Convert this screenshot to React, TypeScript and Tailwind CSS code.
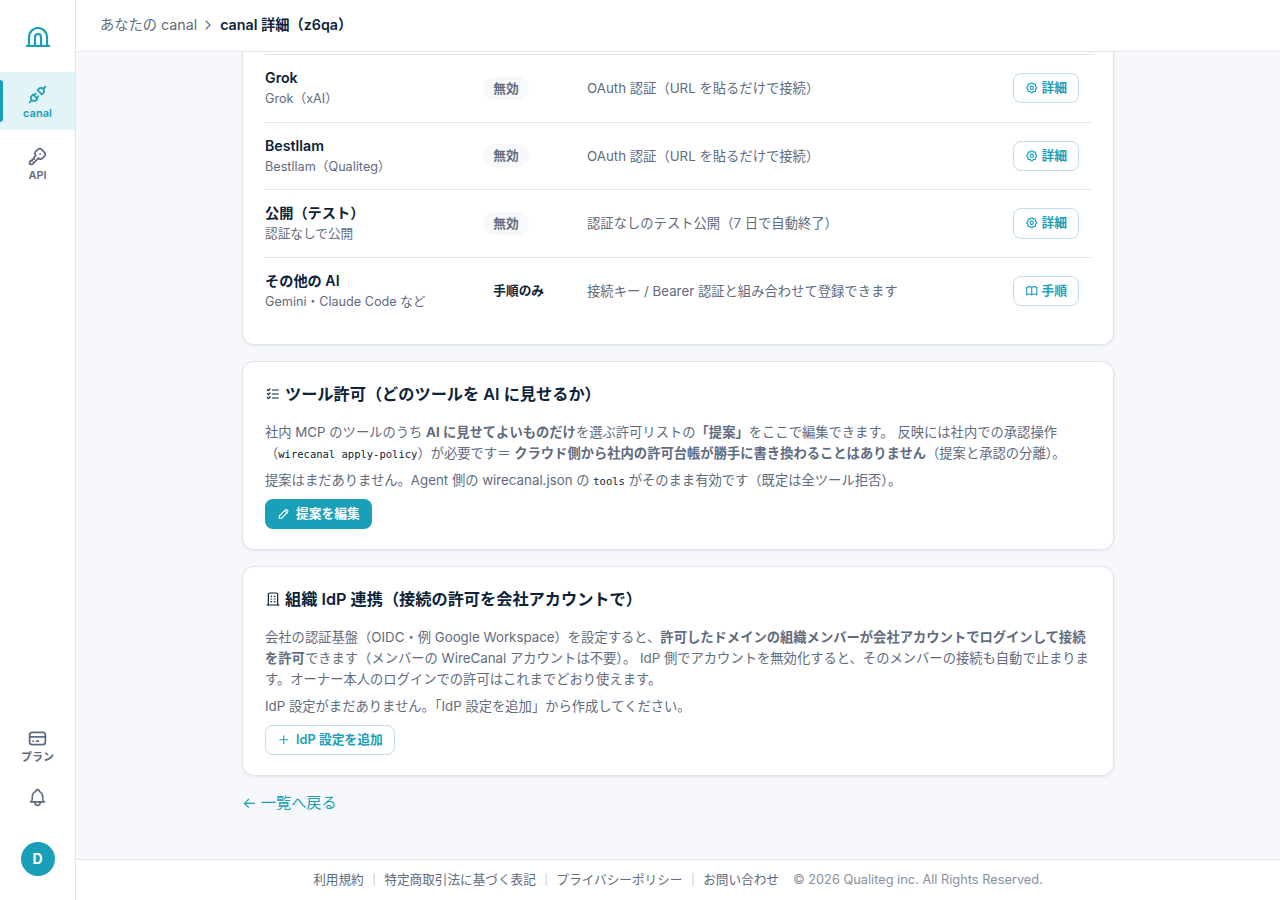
import type { ReactNode } from "react";
import {
  TbBell,
  TbBook,
  TbBuilding,
  TbChevronRight,
  TbCreditCard,
  TbKey,
  TbListCheck,
  TbPencil,
  TbPlugConnected,
  TbPlus,
  TbSettings,
} from "react-icons/tb";

interface Connection {
  name: string;
  sub: string;
  status: string;
  description: string;
  guideOnly?: boolean;
}

const connections: Connection[] = [
  {
    name: "Grok",
    sub: "Grok（xAI）",
    status: "無効",
    description: "OAuth 認証（URL を貼るだけで接続）",
  },
  {
    name: "Bestllam",
    sub: "Bestllam（Qualiteg）",
    status: "無効",
    description: "OAuth 認証（URL を貼るだけで接続）",
  },
  {
    name: "公開（テスト）",
    sub: "認証なしで公開",
    status: "無効",
    description: "認証なしのテスト公開（7 日で自動終了）",
  },
  {
    name: "その他の AI",
    sub: "Gemini・Claude Code など",
    status: "手順のみ",
    description: "接続キー / Bearer 認証と組み合わせて登録できます",
    guideOnly: true,
  },
];

const footerLinks = [
  "利用規約",
  "特定商取引法に基づく表記",
  "プライバシーポリシー",
  "お問い合わせ",
];

function Logo() {
  return (
    <svg
      viewBox="0 0 24 20"
      className="h-5 w-6"
      fill="none"
      stroke="#1a9fb8"
      strokeWidth="2.2"
    >
      <path d="M0 19h24" />
      <path d="M3 19v-9a9 9 0 0 1 18 0v9" />
      <path d="M9 19v-9a3 3 0 0 1 6 0v9" />
    </svg>
  );
}

function Sidebar() {
  return (
    <aside className="flex w-[76px] shrink-0 flex-col items-center border-r border-[#e2e5ec] bg-white text-[11px] font-semibold text-[#5f6b7e]">
      <div className="flex h-[72px] w-full items-center justify-center pt-0.5">
        <Logo />
      </div>
      <a className="relative flex h-[58px] w-full flex-col items-center bg-[#e2f4f7] pt-3 text-[#1a9fb8]">
        <span className="absolute top-2 left-0 h-[42px] w-[3px] rounded-r-[3px] bg-[#1a9fb8]" />
        <TbPlugConnected className="size-[21px]" />
        <span className="leading-4">canal</span>
      </a>
      <a className="mt-1 flex h-[58px] w-full flex-col items-center pt-3">
        <TbKey className="size-[21px]" />
        <span className="leading-4">API</span>
      </a>
      <div className="flex-1" />
      <a className="flex w-full flex-col items-center">
        <TbCreditCard className="size-[21px]" />
        <span className="leading-4">プラン</span>
      </a>
      <TbBell className="mt-[22px] size-[21px]" strokeWidth={1.8} />
      <div className="mt-[34px] mb-6 flex size-[34px] items-center justify-center rounded-full bg-[#1a9fb8] pb-px text-[14px] font-bold text-white">
        D
      </div>
    </aside>
  );
}

function OutlineButton({ children }: { children: ReactNode }) {
  return (
    <button className="flex items-center rounded-lg border border-[#c0dcef] bg-white px-[11px] pb-px text-[12.75px] font-semibold text-[#1a9fb8]">
      {children}
    </button>
  );
}

function Code({ children }: { children: ReactNode }) {
  return (
    <code className="font-['DejaVu_Sans_Mono',monospace] text-[10.5px] leading-none text-[#0b2239]">
      {children}
    </code>
  );
}

function ConnectionRow({ item }: { item: Connection }) {
  return (
    <div className="grid h-[67.6px] grid-cols-[218px_104px_1fr_78px] items-center border-t border-[#e2e5ec]">
      <div>
        <div className="text-[14.2px] leading-[22px] font-semibold">
          {item.name}
        </div>
        <div className="text-[12.66px] leading-[20.6px] text-[#5f6b7e]">
          {item.sub}
        </div>
      </div>
      <div className="pb-[2.6px]">
        <span
          className={
            "inline-block rounded-full px-[10.3px] text-[12.7px] leading-[23px] font-semibold " +
            (item.guideOnly ? "" : "bg-[#f6f8fc] text-[#5f6b7e]")
          }
        >
          {item.status}
        </span>
      </div>
      <div className="pt-[1.4px] text-[13.32px] text-[#5f6b7e]">
        {item.description}
      </div>
      <div className="flex h-[30.4px]">
        <OutlineButton>
          {item.guideOnly ? (
            <TbBook className="mr-[3px] size-[13.5px]" />
          ) : (
            <TbSettings className="mr-[3px] size-[13.5px]" />
          )}
          {item.guideOnly ? "手順" : "詳細"}
        </OutlineButton>
      </div>
    </div>
  );
}

function Card({
  icon,
  title,
  children,
}: {
  icon: ReactNode;
  title: string;
  children: ReactNode;
}) {
  return (
    <section className="mt-4 rounded-xl border border-[#e2e5ec] bg-white px-[22px] pt-[19px] shadow-[0_1px_3px_rgba(16,24,40,0.08)]">
      <h2 className="flex items-center gap-1 text-[16.2px] leading-[26px] font-semibold">
        {icon}
        {title}
      </h2>
      <div className="mt-[15px] text-[13.3px] leading-[21px] text-[#5f6b7e]">
        {children}
      </div>
    </section>
  );
}

export default function App() {
  return (
    <div
      lang="ja"
      className="flex h-[900px] w-[1280px] overflow-hidden bg-[#f6f8fc] font-[Inter,'Noto_Sans_CJK_JP',sans-serif] text-[#0b2239]"
    >
      <Sidebar />
      <div className="flex min-w-0 flex-1 flex-col">
        <header className="flex h-[52px] shrink-0 items-center border-b border-[#e2e5ec] bg-white pb-0.5 pl-6 text-[14.25px]">
          <span className="text-[#5f6b7e]">あなたの canal</span>
          <TbChevronRight
            className="mr-1 ml-[3px] size-4 text-[#5f6b7e]"
            strokeWidth={1.6}
          />
          <span className="font-semibold">canal 詳細（z6qa）</span>
        </header>

        <main className="mx-auto w-[872px] flex-1">
          <section className="h-[293px] rounded-b-xl border border-t-0 border-[#e2e5ec] bg-white px-[22px] pt-0.5 shadow-[0_1px_3px_rgba(16,24,40,0.08)]">
            {connections.map((item) => (
              <ConnectionRow key={item.name} item={item} />
            ))}
          </section>

          <Card
            icon={<TbListCheck className="size-4" strokeWidth={1.8} />}
            title="ツール許可（どのツールを AI に見せるか）"
          >
            <p>
              社内 MCP のツールのうち <b>AI に見せてよいものだけ</b>
              を選ぶ許可リストの<b>「提案」</b>をここで編集できます。
              反映には社内での承認操作（
              <Code>wirecanal apply-policy</Code>
              ）が必要です＝{" "}
              <b>クラウド側から社内の許可台帳が勝手に書き換わることはありません</b>
              （提案と承認の分離）。
            </p>
            <p className="mt-1.5">
              提案はまだありません。Agent 側の wirecanal.json の{" "}
              <Code>tools</Code>{" "}
              がそのまま有効です（既定は全ツール拒否）。
            </p>
            <button className="mt-2 mb-5 flex h-[30px] items-center rounded-lg bg-[#1a9fb8] px-3 pb-px text-[12.75px] font-semibold text-white">
              <TbPencil className="mr-[5.5px] size-[13.5px]" />
              提案を編集
            </button>
          </Card>

          <Card
            icon={<TbBuilding className="size-4" strokeWidth={1.8} />}
            title="組織 IdP 連携（接続の許可を会社アカウントで）"
          >
            <p>
              会社の認証基盤（OIDC・例 Google Workspace）を設定すると、
              <b>
                許可したドメインの組織メンバーが会社アカウントでログインして接続を許可
              </b>
              できます（メンバーの WireCanal アカウントは不要）。 IdP
              側でアカウントを無効化すると、そのメンバーの接続も自動で止まります。オーナー本人のログインでの許可はこれまでどおり使えます。
            </p>
            <p className="mt-1.5">
              IdP 設定がまだありません。「IdP
              設定を追加」から作成してください。
            </p>
            <div className="mt-2 mb-5 flex h-[30px]">
              <OutlineButton>
                <TbPlus className="mr-[5.5px] size-[13.5px]" />
                IdP 設定を追加
              </OutlineButton>
            </div>
          </Card>

          <a className="mt-[15px] block text-[15.2px] leading-6 text-[#1a9fb8]">
            ← 一覧へ戻る
          </a>
        </main>

        <footer className="flex h-[41px] shrink-0 items-center justify-center border-t border-[#e2e5ec] bg-white text-[12.63px] text-[#5f6b7e]">
          {footerLinks.map((label, i) => (
            <span key={label} className="flex items-center">
              {i > 0 && (
                <span className="mx-[8.5px] text-[11px] text-[#c5cad6]">|</span>
              )}
              {label}
            </span>
          ))}
          <span className="ml-3.5 text-[12.8px] text-[#8790a0]">
            © 2026 Qualiteg inc. All Rights Reserved.
          </span>
        </footer>
      </div>
    </div>
  );
}
